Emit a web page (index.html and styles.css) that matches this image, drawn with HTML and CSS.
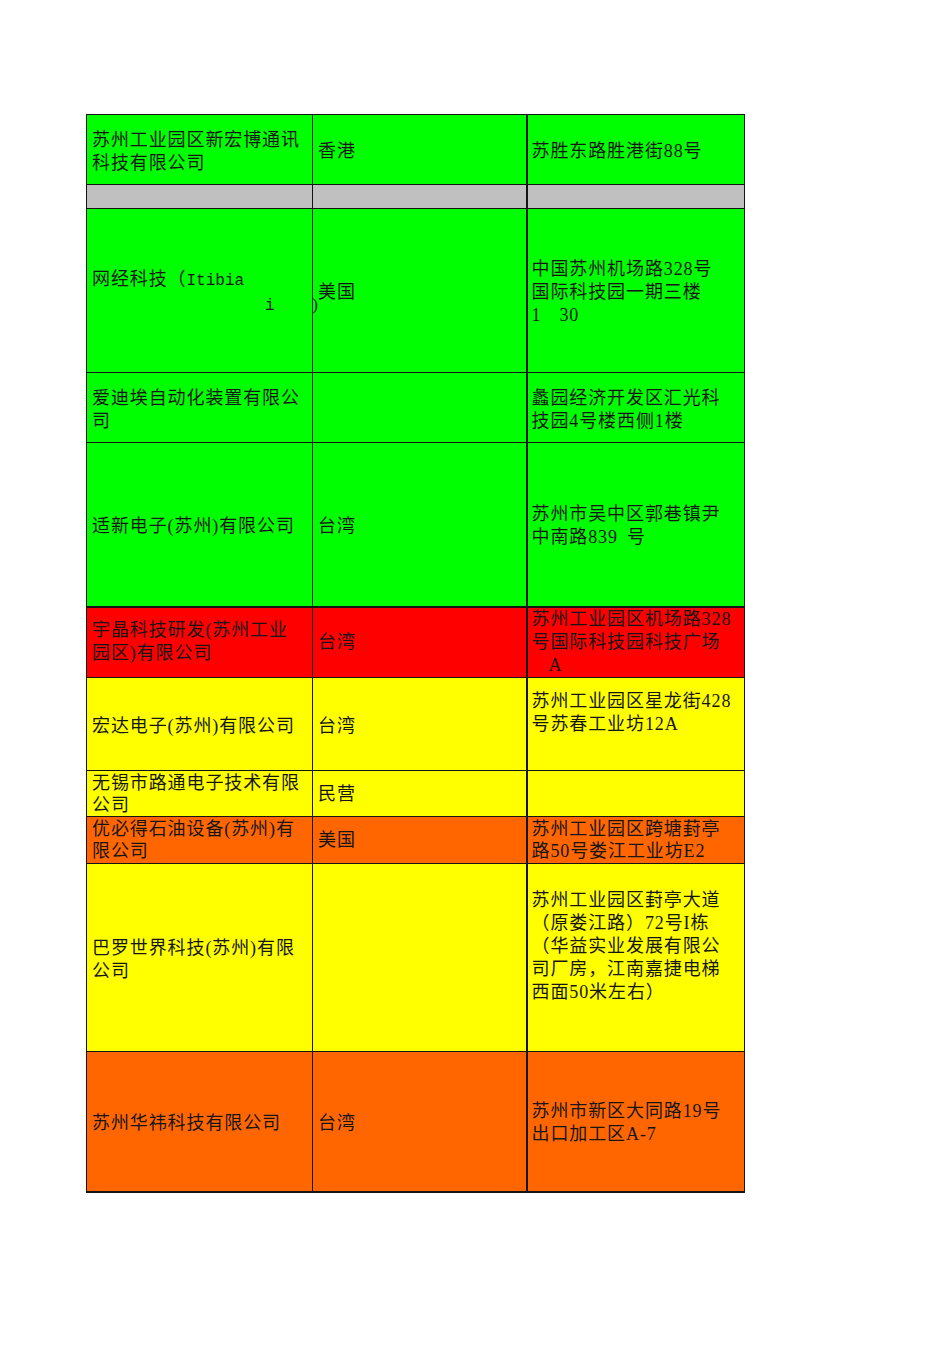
FILE: index.html
```html
<!DOCTYPE html>
<html lang="zh-CN">
<head>
<meta charset="utf-8">
<title>公司列表</title>
<link rel="stylesheet" href="styles.css">
</head>
<body>
<table class="sheet">
  <colgroup>
    <col class="c1">
    <col class="c2">
    <col class="c3">
  </colgroup>
  <tbody>
    <tr class="r70 green">
      <td>苏州工业园区新宏博通讯<br>科技有限公司</td>
      <td>香港</td>
      <td class="addr">苏胜东路胜港街88号</td>
    </tr>
    <tr class="r24 gray">
      <td></td>
      <td></td>
      <td class="addr"></td>
    </tr>
    <tr class="r164 green">
      <td>网经科技（<span class="mono">Itibia</span><br><span class="mono lone-i">i</span><span class="paren">)</span></td>
      <td>美国</td>
      <td class="addr">中国苏州机场路328号<br>国际科技园一期三楼<br>1<span class="gap2"></span>30</td>
    </tr>
    <tr class="r70 green">
      <td>爱迪埃自动化装置有限公<br>司</td>
      <td></td>
      <td class="addr">蠡园经济开发区汇光科<br>技园4号楼西侧1楼</td>
    </tr>
    <tr class="r164 green">
      <td>适新电子(苏州)有限公司</td>
      <td>台湾</td>
      <td class="addr">苏州市吴中区郭巷镇尹<br>中南路839<span class="gap1"></span>号</td>
    </tr>
    <tr class="r71 red thick-top">
      <td>宇晶科技研发(苏州工业<br>园区)有限公司</td>
      <td>台湾</td>
      <td class="addr">苏州工业园区机场路328<br>号国际科技园科技广场<br><span class="indent">A</span></td>
    </tr>
    <tr class="r93 yellow">
      <td>宏达电子(苏州)有限公司</td>
      <td>台湾</td>
      <td class="addr extra-line">苏州工业园区星龙街428<br>号苏春工业坊12A</td>
    </tr>
    <tr class="r46 yellow tight">
      <td>无锡市路通电子技术有限<br>公司</td>
      <td>民营</td>
      <td class="addr"></td>
    </tr>
    <tr class="r47 orange tight">
      <td>优必得石油设备(苏州)有<br>限公司</td>
      <td>美国</td>
      <td class="addr">苏州工业园区跨塘葑亭<br>路50号娄江工业坊E2</td>
    </tr>
    <tr class="r188 yellow">
      <td>巴罗世界科技(苏州)有限<br>公司</td>
      <td></td>
      <td class="addr extra-line">苏州工业园区葑亭大道<br>（原娄江路）72号I栋<br>（华益实业发展有限公<br>司厂房，江南嘉捷电梯<br>西面50米左右）</td>
    </tr>
    <tr class="r140 orange">
      <td>苏州华祎科技有限公司</td>
      <td>台湾</td>
      <td class="addr">苏州市新区大同路19号<br>出口加工区A-7</td>
    </tr>
  </tbody>
</table>
</body>
</html>
```

FILE: styles.css
```css
html, body {
  margin: 0;
  padding: 0;
  background: #ffffff;
}

body {
  font-family: "Liberation Serif", "Noto Sans CJK SC", serif;
}

.sheet {
  border-collapse: collapse;
  table-layout: fixed;
  width: 658px;
  margin: 114px 0 0 86px;
}

.c1 { width: 226px; }
.c2 { width: 214px; }
.c3 { width: 218px; }

.sheet td {
  border: 1px solid #141414;
  padding: 4px 3px 0 5px;
  vertical-align: middle;
  text-align: left;
  white-space: nowrap;
  overflow: visible;
  font-family: "Liberation Serif", "Noto Sans CJK SC", serif;
  font-size: 18px;
  line-height: 23px;
  letter-spacing: 0.9px;
  color: #161616;
}

.sheet td.addr {
  border-left: 2px solid #141414;
  padding-left: 4px;
}

.thick-top td {
  border-top: 2px solid #141414;
}

.sheet tr:last-child td {
  border-bottom: 2px solid #141414;
}

.r24 { height: 24px; }
.r46 { height: 46px; }
.r47 { height: 47px; }
.r70 { height: 70px; }
.r71 { height: 71px; }
.r93 { height: 93px; }
.r140 { height: 140px; }
.r164 { height: 164px; }
.r188 { height: 188px; }

.green td { background: #00ff00; }
.gray td { background: #c0c0c0; }
.red td { background: #ff0000; }
.yellow td { background: #ffff00; }
.orange td { background: #ff6600; }

.sheet .tight td {
  line-height: 22px;
  padding-top: 0;
}

.sheet .red td {
  padding-top: 0;
}

.sheet td.extra-line {
  padding-top: 0;
  padding-bottom: 23px;
}

.mono {
  font-family: "Liberation Mono", "Noto Sans CJK SC", monospace;
  font-size: 16px;
  letter-spacing: 0;
}

.lone-i {
  display: inline-block;
  margin-left: 173px;
}

.paren {
  display: inline-block;
  margin-left: 38px;
  font-size: 16px;
}

.gap1 {
  display: inline-block;
  width: 9px;
}

.gap2 {
  display: inline-block;
  width: 18px;
}

.indent {
  display: inline-block;
  margin-left: 17px;
}
```
